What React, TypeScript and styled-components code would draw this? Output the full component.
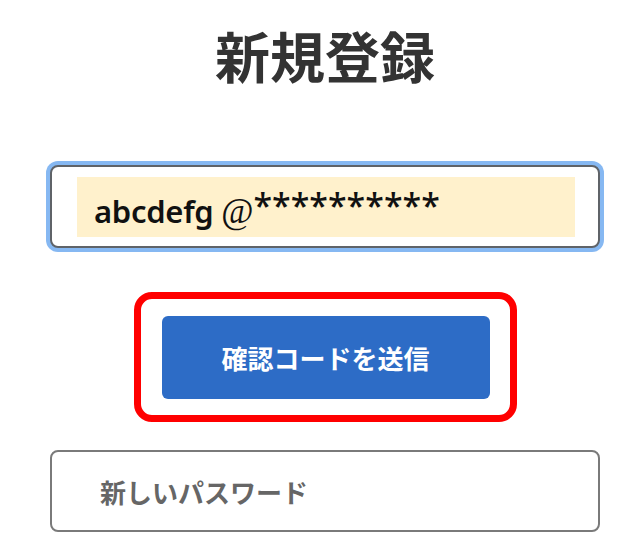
import React from 'react';
import styled, { createGlobalStyle } from 'styled-components';

const GlobalStyle = createGlobalStyle`
  html, body {
    margin: 0;
    padding: 0;
    background: #ffffff;
  }
  body {
    font-family: "Noto Sans", "Noto Sans CJK JP", sans-serif;
  }
`;

const Page = styled.div`
  width: 628px;
  height: 558px;
  box-sizing: border-box;
  padding: 24px 28px 0 50px;
  overflow: hidden;
`;

const Form = styled.div`
  display: flex;
  flex-direction: column;
  align-items: stretch;
`;

const Title = styled.h1`
  margin: 0;
  text-align: center;
  font-family: "Noto Sans CJK JP", sans-serif;
  font-size: 55px;
  line-height: 60px;
  font-weight: 700;
  color: #333333;
`;

const Field = styled.div<{ $focused?: boolean }>`
  box-sizing: border-box;
  height: 83px;
  border: 2px solid ${(p) => (p.$focused ? '#5f6368' : '#7a7a7a')};
  border-radius: 8px;
  background: #ffffff;
  box-shadow: ${(p) => (p.$focused ? '0 0 0 4px #86b8f2' : 'none')};
  display: flex;
  align-items: center;
`;

const EmailField = styled(Field)`
  margin-top: 81px;
  padding: 10px 23px 9px 25px;
`;

const AutofillValue = styled.div`
  flex: 1;
  box-sizing: border-box;
  height: 60px;
  background: #fff1cc;
  padding: 3px 0 0 17px;
  line-height: 50px;
  font-family: "Noto Sans", "Noto Sans CJK JP", sans-serif;
  font-size: 31px;
  font-weight: 600;
  letter-spacing: -0.3px;
  color: #111111;
  white-space: nowrap;
`;

const AtMark = styled.span`
  font-family: "Liberation Serif", serif;
  font-weight: 400;
  font-size: 35px;
  letter-spacing: 0;
`;

const Masked = styled.span`
  font-size: 34px;
  font-weight: 500;
  letter-spacing: 0;
  vertical-align: 5px;
`;

const Highlight = styled.div`
  align-self: center;
  margin-top: 44px;
  box-sizing: border-box;
  width: 383px;
  border: 7px solid #ff0000;
  border-radius: 18px;
  padding: 17px 20px 16px 21px;
`;

const SendButton = styled.button`
  display: block;
  width: 100%;
  height: 83px;
  border: none;
  border-radius: 6px;
  background: #2d6cc6;
  color: #ffffff;
  font-family: "Noto Sans CJK JP", sans-serif;
  font-size: 26px;
  font-weight: 700;
  cursor: pointer;
`;

const PasswordField = styled(Field)`
  margin-top: 28px;
  height: 82px;
`;

const PasswordInput = styled.input`
  flex: 1;
  border: none;
  outline: none;
  background: transparent;
  padding: 0 0 0 48px;
  font-family: "Noto Sans CJK JP", sans-serif;
  font-size: 26px;
  font-weight: 700;
  color: #333333;

  &::placeholder {
    color: #666666;
    opacity: 1;
  }
`;

const App: React.FC = () => {
  return (
    <>
      <GlobalStyle />
      <Page>
        <Form>
          <Title>新規登録</Title>

          <EmailField $focused>
            <AutofillValue>
              abcdefg <AtMark>@</AtMark>
              <Masked>**********</Masked>
            </AutofillValue>
          </EmailField>

          <Highlight>
            <SendButton type="button">確認コードを送信</SendButton>
          </Highlight>

          <PasswordField>
            <PasswordInput type="password" placeholder="新しいパスワード" />
          </PasswordField>
        </Form>
      </Page>
    </>
  );
};

export default App;
